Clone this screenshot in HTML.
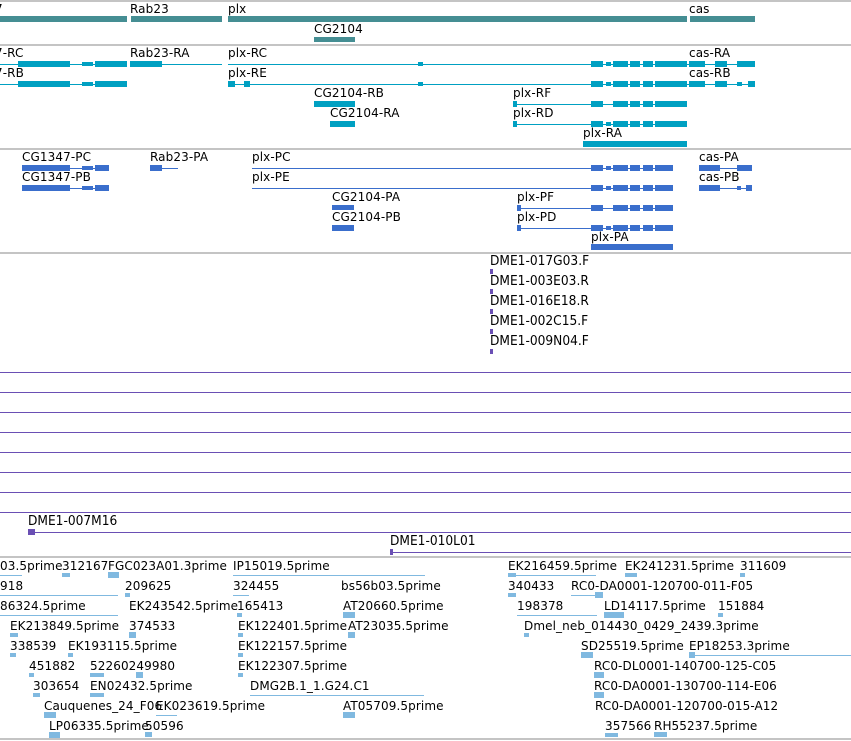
<!DOCTYPE html>
<html><head><meta charset="utf-8"><style>
html,body{margin:0;padding:0;background:#fff;width:851px;height:741px;overflow:hidden;position:relative}
div{position:absolute}
.l{font:12px "DejaVu Sans","Liberation Sans",sans-serif;line-height:14px;white-space:nowrap;color:#000;letter-spacing:0.1px;margin-top:1px}
.e{font:13px "DejaVu Sans","Liberation Sans",sans-serif;line-height:14px;white-space:nowrap;color:#000;transform:scaleX(.94);transform-origin:0 0;margin-top:1px}
.hr{left:0;width:851px;height:2px;background:#c4c4c4}
.g{background:#458e93}
.t{background:#00a0c2}
.p{background:#3a6ecc}
.u{background:#6a4fb4}
.c{background:#80b9e0}
</style></head><body>
<div class="hr" style="top:0px"></div>
<div class="hr" style="top:44px"></div>
<div class="hr" style="top:148px"></div>
<div class="hr" style="top:252px"></div>
<div class="hr" style="top:556px"></div>
<div class="hr" style="top:738px"></div>

<!-- gene track -->
<div class="l" style="left:-5px;top:1px">7</div>
<div class="l" style="left:130px;top:1px">Rab23</div>
<div class="l" style="left:228px;top:1px">plx</div>
<div class="l" style="left:689px;top:1px">cas</div>
<div class="g" style="left:0;top:16px;width:127px;height:6px"></div>
<div class="g" style="left:131px;top:16px;width:91px;height:6px"></div>
<div class="g" style="left:228px;top:16px;width:459px;height:6px"></div>
<div class="g" style="left:690px;top:16px;width:65px;height:6px"></div>
<div class="l" style="left:314px;top:21px">CG2104</div>
<div class="g" style="left:314px;top:37px;width:41px;height:5px"></div>

<!-- transcript track -->
<div class="l" style="left:-5px;top:45px">7-RC</div>
<div class="l" style="left:130px;top:45px">Rab23-RA</div>
<div class="l" style="left:228px;top:45px">plx-RC</div>
<div class="l" style="left:689px;top:45px">cas-RA</div>
<div class="t" style="left:0;top:64px;width:127px;height:1px"></div>
<div class="t" style="left:18px;top:61px;width:52px;height:6px"></div>
<div class="t" style="left:82px;top:62px;width:11px;height:4px"></div>
<div class="t" style="left:95px;top:61px;width:32px;height:6px"></div>
<div class="t" style="left:130px;top:61px;width:32px;height:6px"></div>
<div class="t" style="left:162px;top:64px;width:60px;height:1px"></div>
<div class="t" style="left:228px;top:64px;width:527px;height:1px"></div>
<div class="t" style="left:418px;top:62px;width:5px;height:4px"></div>
<div class="t" style="left:591px;top:61px;width:12px;height:6px"></div>
<div class="t" style="left:606px;top:62px;width:5px;height:4px"></div>
<div class="t" style="left:613px;top:61px;width:15px;height:6px"></div>
<div class="t" style="left:630px;top:61px;width:10px;height:6px"></div>
<div class="t" style="left:643px;top:61px;width:10px;height:6px"></div>
<div class="t" style="left:655px;top:61px;width:32px;height:6px"></div>
<div class="t" style="left:689px;top:61px;width:16px;height:6px"></div>
<div class="t" style="left:715px;top:61px;width:12px;height:6px"></div>
<div class="t" style="left:737px;top:61px;width:18px;height:6px"></div>

<div class="l" style="left:-5px;top:65px">7-RB</div>
<div class="l" style="left:228px;top:65px">plx-RE</div>
<div class="l" style="left:689px;top:65px">cas-RB</div>
<div class="t" style="left:0;top:84px;width:127px;height:1px"></div>
<div class="t" style="left:18px;top:81px;width:52px;height:6px"></div>
<div class="t" style="left:82px;top:82px;width:11px;height:4px"></div>
<div class="t" style="left:95px;top:81px;width:32px;height:6px"></div>
<div class="t" style="left:228px;top:84px;width:527px;height:1px"></div>
<div class="t" style="left:228px;top:81px;width:7px;height:6px"></div>
<div class="t" style="left:244px;top:81px;width:6px;height:6px"></div>
<div class="t" style="left:418px;top:82px;width:5px;height:4px"></div>
<div class="t" style="left:591px;top:81px;width:12px;height:6px"></div>
<div class="t" style="left:606px;top:82px;width:5px;height:4px"></div>
<div class="t" style="left:613px;top:81px;width:15px;height:6px"></div>
<div class="t" style="left:630px;top:81px;width:10px;height:6px"></div>
<div class="t" style="left:643px;top:81px;width:10px;height:6px"></div>
<div class="t" style="left:655px;top:81px;width:32px;height:6px"></div>
<div class="t" style="left:689px;top:81px;width:16px;height:6px"></div>
<div class="t" style="left:715px;top:81px;width:12px;height:6px"></div>
<div class="t" style="left:737px;top:82px;width:5px;height:4px"></div>
<div class="t" style="left:748px;top:81px;width:7px;height:6px"></div>

<div class="l" style="left:314px;top:85px">CG2104-RB</div>
<div class="t" style="left:314px;top:101px;width:41px;height:6px"></div>
<div class="l" style="left:330px;top:105px">CG2104-RA</div>
<div class="t" style="left:330px;top:121px;width:25px;height:6px"></div>

<div class="l" style="left:513px;top:85px">plx-RF</div>
<div class="t" style="left:513px;top:104px;width:174px;height:1px"></div>
<div class="t" style="left:513px;top:101px;width:4px;height:6px"></div>
<div class="t" style="left:591px;top:101px;width:12px;height:6px"></div>
<div class="t" style="left:613px;top:101px;width:15px;height:6px"></div>
<div class="t" style="left:630px;top:101px;width:10px;height:6px"></div>
<div class="t" style="left:643px;top:101px;width:10px;height:6px"></div>
<div class="t" style="left:655px;top:101px;width:32px;height:6px"></div>
<div class="l" style="left:513px;top:105px">plx-RD</div>
<div class="t" style="left:513px;top:124px;width:174px;height:1px"></div>
<div class="t" style="left:513px;top:121px;width:4px;height:6px"></div>
<div class="t" style="left:591px;top:121px;width:12px;height:6px"></div>
<div class="t" style="left:606px;top:122px;width:5px;height:4px"></div>
<div class="t" style="left:613px;top:121px;width:15px;height:6px"></div>
<div class="t" style="left:630px;top:121px;width:10px;height:6px"></div>
<div class="t" style="left:643px;top:121px;width:10px;height:6px"></div>
<div class="t" style="left:655px;top:121px;width:32px;height:6px"></div>
<div class="l" style="left:583px;top:125px">plx-RA</div>
<div class="t" style="left:583px;top:141px;width:104px;height:6px"></div>

<!-- protein track -->
<div class="l" style="left:22px;top:149px">CG1347-PC</div>
<div class="l" style="left:150px;top:149px">Rab23-PA</div>
<div class="l" style="left:252px;top:149px">plx-PC</div>
<div class="l" style="left:699px;top:149px">cas-PA</div>
<div class="p" style="left:22px;top:168px;width:87px;height:1px"></div>
<div class="p" style="left:22px;top:165px;width:48px;height:6px"></div>
<div class="p" style="left:82px;top:166px;width:11px;height:4px"></div>
<div class="p" style="left:95px;top:165px;width:14px;height:6px"></div>
<div class="p" style="left:150px;top:168px;width:28px;height:1px"></div>
<div class="p" style="left:150px;top:165px;width:12px;height:6px"></div>
<div class="p" style="left:252px;top:168px;width:421px;height:1px"></div>
<div class="p" style="left:591px;top:165px;width:12px;height:6px"></div>
<div class="p" style="left:606px;top:166px;width:5px;height:4px"></div>
<div class="p" style="left:613px;top:165px;width:15px;height:6px"></div>
<div class="p" style="left:630px;top:165px;width:10px;height:6px"></div>
<div class="p" style="left:643px;top:165px;width:10px;height:6px"></div>
<div class="p" style="left:655px;top:165px;width:18px;height:6px"></div>
<div class="p" style="left:699px;top:165px;width:21px;height:6px"></div>
<div class="p" style="left:737px;top:165px;width:15px;height:6px"></div>
<div class="p" style="left:699px;top:168px;width:53px;height:1px"></div>

<div class="l" style="left:22px;top:169px">CG1347-PB</div>
<div class="l" style="left:252px;top:169px">plx-PE</div>
<div class="l" style="left:699px;top:169px">cas-PB</div>
<div class="p" style="left:22px;top:188px;width:87px;height:1px"></div>
<div class="p" style="left:22px;top:185px;width:48px;height:6px"></div>
<div class="p" style="left:82px;top:186px;width:11px;height:4px"></div>
<div class="p" style="left:95px;top:185px;width:14px;height:6px"></div>
<div class="p" style="left:252px;top:188px;width:421px;height:1px"></div>
<div class="p" style="left:591px;top:185px;width:12px;height:6px"></div>
<div class="p" style="left:606px;top:186px;width:5px;height:4px"></div>
<div class="p" style="left:613px;top:185px;width:15px;height:6px"></div>
<div class="p" style="left:630px;top:185px;width:10px;height:6px"></div>
<div class="p" style="left:643px;top:185px;width:10px;height:6px"></div>
<div class="p" style="left:655px;top:185px;width:18px;height:6px"></div>
<div class="p" style="left:699px;top:188px;width:53px;height:1px"></div>
<div class="p" style="left:699px;top:185px;width:21px;height:6px"></div>
<div class="p" style="left:737px;top:186px;width:4px;height:4px"></div>
<div class="p" style="left:746px;top:185px;width:6px;height:6px"></div>

<div class="l" style="left:332px;top:189px">CG2104-PA</div>
<div class="p" style="left:332px;top:205px;width:22px;height:5px"></div>
<div class="l" style="left:332px;top:209px">CG2104-PB</div>
<div class="p" style="left:332px;top:225px;width:22px;height:6px"></div>
<div class="l" style="left:517px;top:189px">plx-PF</div>
<div class="p" style="left:517px;top:208px;width:156px;height:1px"></div>
<div class="p" style="left:517px;top:205px;width:4px;height:6px"></div>
<div class="p" style="left:591px;top:205px;width:12px;height:6px"></div>
<div class="p" style="left:613px;top:205px;width:15px;height:6px"></div>
<div class="p" style="left:630px;top:205px;width:10px;height:6px"></div>
<div class="p" style="left:643px;top:205px;width:10px;height:6px"></div>
<div class="p" style="left:655px;top:205px;width:18px;height:6px"></div>
<div class="l" style="left:517px;top:209px">plx-PD</div>
<div class="p" style="left:517px;top:228px;width:156px;height:1px"></div>
<div class="p" style="left:517px;top:225px;width:4px;height:6px"></div>
<div class="p" style="left:591px;top:225px;width:12px;height:6px"></div>
<div class="p" style="left:606px;top:226px;width:5px;height:4px"></div>
<div class="p" style="left:613px;top:225px;width:15px;height:6px"></div>
<div class="p" style="left:630px;top:225px;width:10px;height:6px"></div>
<div class="p" style="left:643px;top:225px;width:10px;height:6px"></div>
<div class="p" style="left:655px;top:225px;width:18px;height:6px"></div>
<div class="l" style="left:591px;top:229px">plx-PA</div>
<div class="p" style="left:591px;top:244px;width:82px;height:6px"></div>

<!-- EST track -->
<div class="e" style="left:490px;top:254px">DME1-017G03.F</div>
<div class="u" style="left:490px;top:269px;width:3px;height:5px"></div>
<div class="e" style="left:490px;top:274px">DME1-003E03.R</div>
<div class="u" style="left:490px;top:289px;width:3px;height:5px"></div>
<div class="e" style="left:490px;top:294px">DME1-016E18.R</div>
<div class="u" style="left:490px;top:309px;width:3px;height:5px"></div>
<div class="e" style="left:490px;top:314px">DME1-002C15.F</div>
<div class="u" style="left:490px;top:329px;width:3px;height:5px"></div>
<div class="e" style="left:490px;top:334px">DME1-009N04.F</div>
<div class="u" style="left:490px;top:349px;width:3px;height:5px"></div>
<div class="u" style="left:0;top:372px;width:851px;height:1px"></div>
<div class="u" style="left:0;top:392px;width:851px;height:1px"></div>
<div class="u" style="left:0;top:412px;width:851px;height:1px"></div>
<div class="u" style="left:0;top:432px;width:851px;height:1px"></div>
<div class="u" style="left:0;top:452px;width:851px;height:1px"></div>
<div class="u" style="left:0;top:472px;width:851px;height:1px"></div>
<div class="u" style="left:0;top:492px;width:851px;height:1px"></div>
<div class="u" style="left:0;top:512px;width:851px;height:1px"></div>
<div class="e" style="left:28px;top:514px">DME1-007M16</div>
<div class="u" style="left:28px;top:532px;width:823px;height:1px"></div>
<div class="u" style="left:28px;top:529px;width:7px;height:6px"></div>
<div class="e" style="left:390px;top:534px">DME1-010L01</div>
<div class="u" style="left:390px;top:552px;width:461px;height:1px"></div>
<div class="u" style="left:390px;top:549px;width:3px;height:6px"></div>

<!-- cDNA track -->
<div class="l" style="left:0;top:558px">03.5prime</div>
<div class="l" style="left:62px;top:558px">312167</div>
<div class="l" style="left:108px;top:558px">FGC023A01.3prime</div>
<div class="l" style="left:233px;top:558px">IP15019.5prime</div>
<div class="l" style="left:508px;top:558px">EK216459.5prime</div>
<div class="l" style="left:625px;top:558px">EK241231.5prime</div>
<div class="l" style="left:740px;top:558px">311609</div>
<div class="c" style="left:0;top:575px;width:22px;height:1px"></div>
<div class="c" style="left:62px;top:573px;width:8px;height:4px"></div>
<div class="c" style="left:108px;top:572px;width:11px;height:6px"></div>
<div class="c" style="left:233px;top:575px;width:192px;height:1px"></div>
<div class="c" style="left:508px;top:575px;width:88px;height:1px"></div>
<div class="c" style="left:508px;top:573px;width:8px;height:4px"></div>
<div class="c" style="left:625px;top:573px;width:12px;height:4px"></div>
<div class="c" style="left:740px;top:573px;width:5px;height:4px"></div>

<div class="l" style="left:0;top:578px">918</div>
<div class="l" style="left:125px;top:578px">209625</div>
<div class="l" style="left:233px;top:578px">324455</div>
<div class="l" style="left:341px;top:578px">bs56b03.5prime</div>
<div class="l" style="left:508px;top:578px">340433</div>
<div class="l" style="left:571px;top:578px">RC0-DA0001-120700-011-F05</div>
<div class="c" style="left:0;top:595px;width:118px;height:1px"></div>
<div class="c" style="left:125px;top:593px;width:5px;height:4px"></div>
<div class="c" style="left:233px;top:595px;width:16px;height:1px"></div>
<div class="c" style="left:508px;top:593px;width:8px;height:4px"></div>
<div class="c" style="left:571px;top:595px;width:32px;height:1px"></div>
<div class="c" style="left:595px;top:592px;width:8px;height:6px"></div>

<div class="l" style="left:0;top:598px">86324.5prime</div>
<div class="l" style="left:129px;top:598px">EK243542.5prime</div>
<div class="l" style="left:237px;top:598px">165413</div>
<div class="l" style="left:343px;top:598px">AT20660.5prime</div>
<div class="l" style="left:517px;top:598px">198378</div>
<div class="l" style="left:604px;top:598px">LD14117.5prime</div>
<div class="l" style="left:718px;top:598px">151884</div>
<div class="c" style="left:0;top:615px;width:118px;height:1px"></div>
<div class="c" style="left:237px;top:613px;width:5px;height:4px"></div>
<div class="c" style="left:343px;top:612px;width:12px;height:6px"></div>
<div class="c" style="left:517px;top:615px;width:80px;height:1px"></div>
<div class="c" style="left:604px;top:612px;width:20px;height:6px"></div>
<div class="c" style="left:718px;top:613px;width:5px;height:4px"></div>

<div class="l" style="left:10px;top:618px">EK213849.5prime</div>
<div class="l" style="left:129px;top:618px">374533</div>
<div class="l" style="left:238px;top:618px">EK122401.5prime</div>
<div class="l" style="left:348px;top:618px">AT23035.5prime</div>
<div class="l" style="left:524px;top:618px">Dmel_neb_014430_0429_2439.3prime</div>
<div class="c" style="left:10px;top:633px;width:8px;height:4px"></div>
<div class="c" style="left:129px;top:632px;width:7px;height:6px"></div>
<div class="c" style="left:238px;top:633px;width:5px;height:4px"></div>
<div class="c" style="left:348px;top:632px;width:7px;height:6px"></div>
<div class="c" style="left:524px;top:633px;width:5px;height:4px"></div>

<div class="l" style="left:10px;top:638px">338539</div>
<div class="l" style="left:68px;top:638px">EK193115.5prime</div>
<div class="l" style="left:238px;top:638px">EK122157.5prime</div>
<div class="l" style="left:581px;top:638px">SD25519.5prime</div>
<div class="l" style="left:689px;top:638px">EP18253.3prime</div>
<div class="c" style="left:10px;top:653px;width:6px;height:4px"></div>
<div class="c" style="left:68px;top:653px;width:5px;height:4px"></div>
<div class="c" style="left:238px;top:653px;width:5px;height:4px"></div>
<div class="c" style="left:581px;top:652px;width:12px;height:6px"></div>
<div class="c" style="left:689px;top:655px;width:162px;height:1px"></div>
<div class="c" style="left:689px;top:652px;width:6px;height:6px"></div>

<div class="l" style="left:29px;top:658px">451882</div>
<div class="l" style="left:90px;top:658px">52260249980</div>
<div class="l" style="left:238px;top:658px">EK122307.5prime</div>
<div class="l" style="left:594px;top:658px">RC0-DL0001-140700-125-C05</div>
<div class="c" style="left:29px;top:673px;width:5px;height:4px"></div>
<div class="c" style="left:90px;top:673px;width:14px;height:4px"></div>
<div class="c" style="left:136px;top:672px;width:7px;height:6px"></div>
<div class="c" style="left:238px;top:673px;width:5px;height:4px"></div>
<div class="c" style="left:594px;top:672px;width:10px;height:6px"></div>

<div class="l" style="left:33px;top:678px">303654</div>
<div class="l" style="left:90px;top:678px">EN02432.5prime</div>
<div class="l" style="left:250px;top:678px">DMG2B.1_1.G24.C1</div>
<div class="l" style="left:594px;top:678px">RC0-DA0001-130700-114-E06</div>
<div class="c" style="left:33px;top:693px;width:7px;height:4px"></div>
<div class="c" style="left:90px;top:693px;width:14px;height:4px"></div>
<div class="c" style="left:250px;top:695px;width:174px;height:1px"></div>
<div class="c" style="left:594px;top:692px;width:10px;height:6px"></div>

<div class="l" style="left:44px;top:698px">Cauquenes_24_F06</div>
<div class="l" style="left:156px;top:698px">EK023619.5prime</div>
<div class="l" style="left:343px;top:698px">AT05709.5prime</div>
<div class="l" style="left:595px;top:698px">RC0-DA0001-120700-015-A12</div>
<div class="c" style="left:44px;top:712px;width:12px;height:6px"></div>
<div class="c" style="left:156px;top:715px;width:21px;height:1px"></div>
<div class="c" style="left:343px;top:712px;width:12px;height:6px"></div>

<div class="l" style="left:49px;top:718px">LP06335.5prime</div>
<div class="l" style="left:145px;top:718px">50596</div>
<div class="l" style="left:605px;top:718px">357566</div>
<div class="l" style="left:654px;top:718px">RH55237.5prime</div>
<div class="c" style="left:49px;top:732px;width:11px;height:6px"></div>
<div class="c" style="left:145px;top:732px;width:7px;height:5px"></div>
<div class="c" style="left:605px;top:733px;width:13px;height:4px"></div>
<div class="c" style="left:654px;top:732px;width:13px;height:5px"></div>
</body></html>
